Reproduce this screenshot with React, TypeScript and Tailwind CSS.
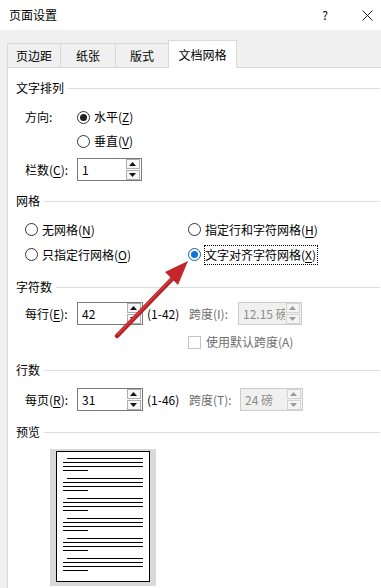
import React from "react";

const FONT = { fontFamily: '"Noto Sans CJK SC", "Noto Sans", sans-serif' };

function U({ c }: { c: string }) {
  return <span className="underline underline-offset-[2px]">{c}</span>;
}

function Radio({ checked, blue }: { checked?: boolean; blue?: boolean }) {
  return (
    <span
      className={
        blue
          ? "flex h-[13px] w-[13px] shrink-0 items-center justify-center rounded-full border border-[#1a5fa8] bg-white"
          : "flex h-[13px] w-[13px] shrink-0 items-center justify-center rounded-full border border-[#333333] bg-white"
      }
    >
      {checked && (
        <span
          className={
            blue
              ? "h-[7px] w-[7px] rounded-full bg-[#0a78d7]"
              : "h-[7px] w-[7px] rounded-full bg-[#222222]"
          }
        />
      )}
    </span>
  );
}

function SpinBtn({ up, disabled }: { up?: boolean; disabled?: boolean }) {
  return (
    <div
      className={
        disabled
          ? "flex h-[10px] w-[14px] items-center justify-center border border-[#d4d4d4] bg-[#f4f4f4]"
          : "flex h-[10px] w-[14px] items-center justify-center border border-[#adadad] bg-[#f7f7f7]"
      }
    >
      <svg width="7" height="4" viewBox="0 0 7 4">
        {up ? (
          <polygon points="0,4 7,4 3.5,0" fill={disabled ? "#9a9a9a" : "#111"} />
        ) : (
          <polygon points="0,0 7,0 3.5,4" fill={disabled ? "#9a9a9a" : "#111"} />
        )}
      </svg>
    </div>
  );
}

function Spinner({
  value,
  disabled,
  className,
}: {
  value: string;
  disabled?: boolean;
  className: string;
}) {
  return (
    <div
      className={
        (disabled
          ? "flex h-[23px] items-stretch border border-[#cccccc] bg-[#f0f0f0] "
          : "flex h-[23px] items-stretch border border-[#7a7a7a] bg-white ") + className
      }
    >
      <div
        className={
          disabled
            ? "flex flex-1 items-center overflow-hidden whitespace-nowrap pl-[4px] text-[#8c8c8c]"
            : "flex flex-1 items-center overflow-hidden whitespace-nowrap pl-[4px] text-black"
        }
      >
        {value}
      </div>
      <div className="flex w-[16px] flex-col items-center justify-center gap-[1px] pr-[1px]">
        <SpinBtn up disabled={disabled} />
        <SpinBtn disabled={disabled} />
      </div>
    </div>
  );
}

function Heading({ text }: { text: string }) {
  return (
    <div className="flex h-[16px] items-center pl-[8px] pr-[1px]">
      <span className="leading-[16px]">{text}</span>
      <div className="ml-[4px] h-px flex-1 bg-[#dcdcdc]" />
    </div>
  );
}

function PreviewPage() {
  const groups = [0, 1, 2, 3, 4, 5];
  return (
    <div className="ml-[42px] mt-[9px] w-[106px] bg-[#d9d9d9] px-[6px] pb-[4px] pt-[2px]">
      <div className="flex h-[131px] flex-col gap-[7px] border border-black bg-white px-[6px] pt-[6px]">
        {groups.map((g) => (
          <div key={g} className="flex flex-col gap-[3px]">
            <div className="ml-[4px] h-px bg-black" />
            <div className="h-px bg-black" />
            <div className="h-px bg-black" />
            <div className="h-px w-[25px] bg-black" />
          </div>
        ))}
      </div>
    </div>
  );
}

export default function App() {
  return (
    <div
      className="relative h-[588px] w-[381px] overflow-hidden bg-white text-[12px] leading-[16px] text-black"
      style={FONT}
    >
      {/* title bar */}
      <div className="flex h-[30px] items-center bg-white pl-[9px]">
        <span className="text-[12px]">页面设置</span>
        <span className="ml-auto mr-[34px] text-[12px]">?</span>
        <svg className="mr-[8px]" width="11" height="11" viewBox="0 0 11 11">
          <line x1="0.5" y1="0.5" x2="10.5" y2="10.5" stroke="#222" strokeWidth="1" />
          <line x1="10.5" y1="0.5" x2="0.5" y2="10.5" stroke="#222" strokeWidth="1" />
        </svg>
      </div>

      {/* tabs band */}
      <div className="flex h-[38px] items-end bg-[#f0f0f0] pl-[7px]">
        <div className="flex h-[25px] w-[54px] items-center justify-center border border-[#d9d9d9] bg-[#f0f0f0]">
          页边距
        </div>
        <div className="-ml-px flex h-[25px] w-[56px] items-center justify-center border border-[#d9d9d9] bg-[#f0f0f0]">
          纸张
        </div>
        <div className="-ml-px flex h-[25px] w-[54px] items-center justify-center border border-[#d9d9d9] bg-[#f0f0f0]">
          版式
        </div>
        <div className="-ml-px flex h-[28px] w-[69px] items-center justify-center border-x border-t border-[#d9d9d9] bg-white pt-[1px]">
          文档网格
        </div>
        <div className="h-px flex-1 bg-[#d9d9d9]" />
      </div>

      {/* body */}
      <div className="flex h-[520px]">
        <div className="w-[7px] bg-[#f0f0f0]" />
        <div className="flex flex-1 flex-col border-l border-[#d9d9d9] bg-white pt-[12px]">
          <Heading text="文字排列" />
          <div className="mt-[9px] flex h-[24px] items-center pl-[17px]">
            <span className="w-[52px]">方向:</span>
            <Radio checked />
            <span className="ml-[4px]">
              水平(<U c="Z" />)
            </span>
          </div>
          <div className="flex h-[24px] items-center pl-[69px]">
            <Radio />
            <span className="ml-[4px]">
              垂直(<U c="V" />)
            </span>
          </div>
          <div className="mt-[5px] flex h-[23px] items-center pl-[17px]">
            <span className="w-[52px]">
              栏数(<U c="C" />):
            </span>
            <Spinner value="1" className="w-[65px]" />
          </div>

          <div className="mt-[12px]">
            <Heading text="网格" />
          </div>
          <div className="mt-[8px] flex h-[25px] items-center pl-[17px]">
            <div className="flex w-[163px] items-center">
              <Radio />
              <span className="ml-[4px]">
                无网格(<U c="N" />)
              </span>
            </div>
            <Radio />
            <span className="ml-[4px]">
              指定行和字符网格(<U c="H" />)
            </span>
          </div>
          <div className="flex h-[25px] items-center pl-[17px]">
            <div className="flex w-[163px] items-center">
              <Radio />
              <span className="ml-[4px]">
                只指定行网格(<U c="O" />)
              </span>
            </div>
            <Radio checked blue />
            <span className="ml-[3px] flex h-[20px] items-center border border-dotted border-black pr-[1px]">
              文字对齐字符网格(<U c="X" />)
            </span>
          </div>

          <div className="mt-[12px]">
            <Heading text="字符数" />
          </div>
          <div className="mt-[7px] flex h-[23px] items-center pl-[17px]">
            <span className="w-[52px]">
              每行(<U c="E" />):
            </span>
            <Spinner value="42" className="w-[66px]" />
            <span className="ml-[4px] w-[42px]">(1-42)</span>
            <span className="w-[49px] text-[#6d6d6d]">跨度(I):</span>
            <Spinner value="12.15 磅" disabled className="w-[64px]" />
          </div>
          <div className="mt-[8px] flex h-[18px] items-center pl-[180px]">
            <span className="h-[13px] w-[13px] border border-[#c4c4c4] bg-white" />
            <span className="ml-[5px] text-[#6d6d6d]">使用默认跨度(A)</span>
          </div>

          <div className="mt-[11px]">
            <Heading text="行数" />
          </div>
          <div className="mt-[10px] flex h-[23px] items-center pl-[17px]">
            <span className="w-[52px]">
              每页(<U c="R" />):
            </span>
            <Spinner value="31" className="w-[66px]" />
            <span className="ml-[4px] w-[42px]">(1-46)</span>
            <span className="w-[51px] text-[#6d6d6d]">跨度(T):</span>
            <Spinner value="24 磅" disabled className="w-[63px]" />
          </div>

          <div className="mt-[13px]">
            <Heading text="预览" />
          </div>
          <PreviewPage />
        </div>
      </div>

      {/* red annotation arrow */}
      <svg
        className="pointer-events-none absolute left-0 top-0"
        width="381"
        height="588"
        viewBox="0 0 381 588"
      >
        <line x1="117" y1="336" x2="173" y2="278" stroke="#b3242a" strokeWidth="4.5" strokeLinecap="round" />
        <line x1="118" y1="334" x2="172" y2="278" stroke="#d83a3f" strokeWidth="1.5" strokeLinecap="round" />
        <polygon points="188,261 165,272 178,285" fill="#c4262c" />
      </svg>
    </div>
  );
}
